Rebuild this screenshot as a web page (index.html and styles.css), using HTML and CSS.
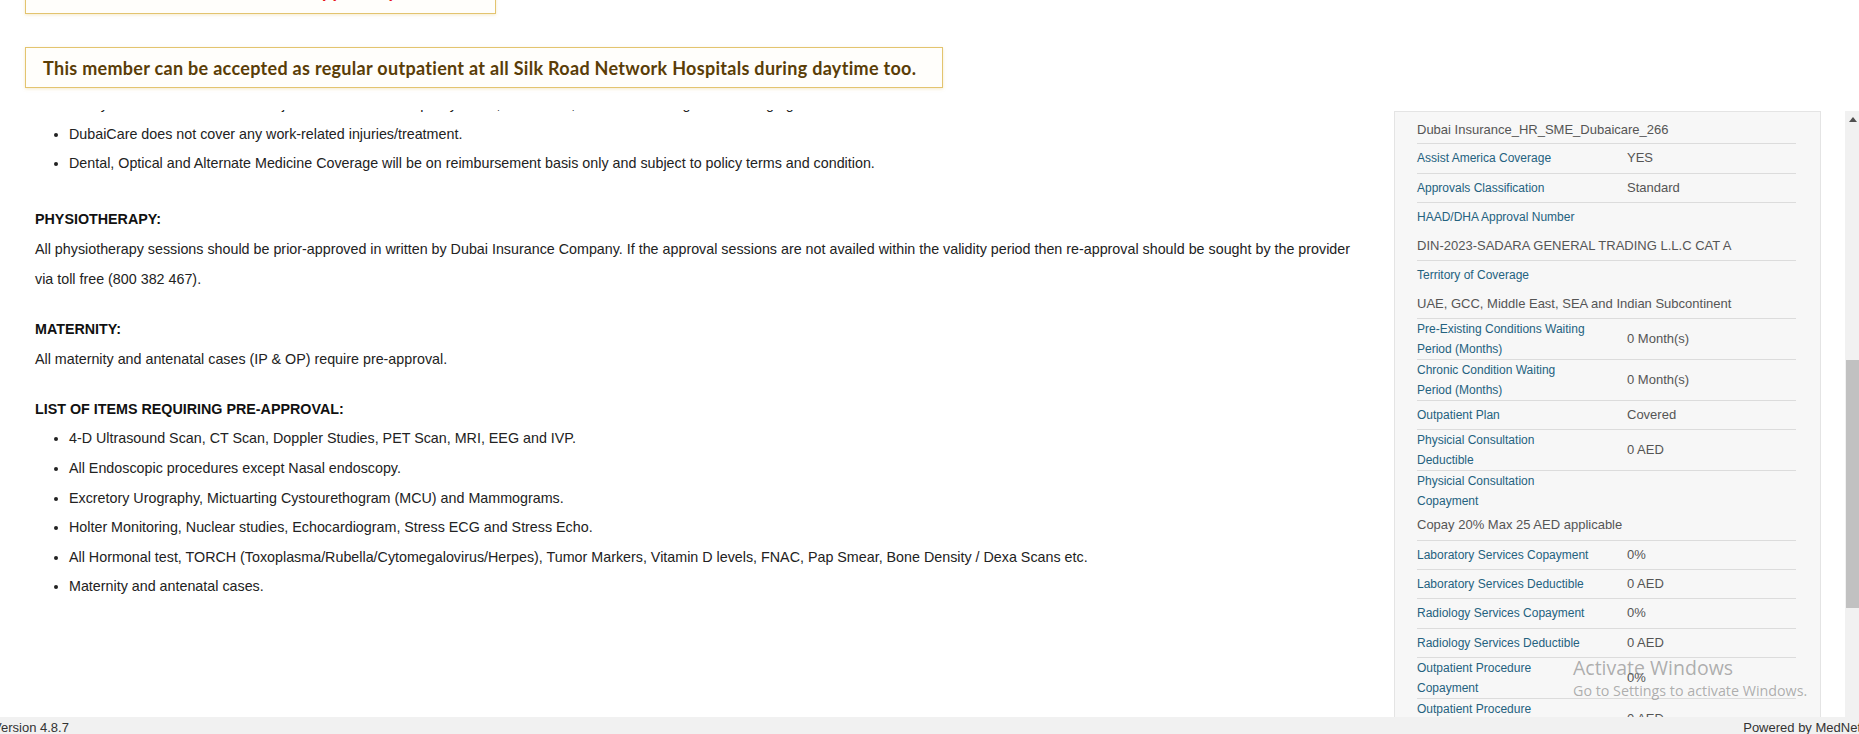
FILE: index.html
```html
<!DOCTYPE html>
<html lang="en">
<head>
<meta charset="utf-8">
<title>Member Benefits</title>
<link rel="stylesheet" href="styles.css">
</head>
<body>
<div class="page">
  <header class="alerts">
    <div class="alert alert-red">In-Patient Admissions Need Pre-Approval process</div>
    <div class="alert alert-brown">This member can be accepted as regular outpatient at all Silk Road Network Hospitals during daytime too.</div>
  </header>

  <main class="main">
    <section class="notes">
      <div class="notes-inner">
        <ul class="list">
          <li>Kindly note that all claims are subject to the DubaiCare policy terms, exclusions, limitations and agreed coverage guidelines.</li>
          <li>DubaiCare does not cover any work-related injuries/treatment.</li>
          <li>Dental, Optical and Alternate Medicine Coverage will be on reimbursement basis only and subject to policy terms and condition.</li>
        </ul>

        <h4 class="heading">PHYSIOTHERAPY:</h4>
        <p class="text">All physiotherapy sessions should be prior-approved in written by Dubai Insurance Company. If the approval sessions are not availed within the validity period then re-approval should be sought by the provider via toll free (800 382 467).</p>

        <h4 class="heading">MATERNITY:</h4>
        <p class="text">All maternity and antenatal cases (IP &amp; OP) require pre-approval.</p>

        <h4 class="heading">LIST OF ITEMS REQUIRING PRE-APPROVAL:</h4>
        <ul class="list">
          <li>4-D Ultrasound Scan, CT Scan, Doppler Studies, PET Scan, MRI, EEG and IVP.</li>
          <li>All Endoscopic procedures except Nasal endoscopy.</li>
          <li>Excretory Urography, Mictuarting Cystourethogram (MCU) and Mammograms.</li>
          <li>Holter Monitoring, Nuclear studies, Echocardiogram, Stress ECG and Stress Echo.</li>
          <li>All Hormonal test, TORCH (Toxoplasma/Rubella/Cytomegalovirus/Herpes), Tumor Markers, Vitamin D levels, FNAC, Pap Smear, Bone Density / Dexa Scans etc.</li>
          <li>Maternity and antenatal cases.</li>
        </ul>
      </div>
    </section>

    <aside class="side">
      <div class="panel">
        <div class="row row-plain">Dubai Insurance_HR_SME_Dubaicare_266</div>
        <div class="row"><span class="label">Assist America Coverage</span><span class="value">YES</span></div>
        <div class="row"><span class="label">Approvals Classification</span><span class="value">Standard</span></div>
        <div class="row row-stack"><span class="label">HAAD/DHA Approval Number</span><span class="value">DIN-2023-SADARA GENERAL TRADING L.L.C CAT A</span></div>
        <div class="row row-stack"><span class="label">Territory of Coverage</span><span class="value">UAE, GCC, Middle East, SEA and Indian Subcontinent</span></div>
        <div class="row"><span class="label">Pre-Existing Conditions Waiting Period (Months)</span><span class="value">0 Month(s)</span></div>
        <div class="row"><span class="label">Chronic Condition Waiting Period (Months)</span><span class="value">0 Month(s)</span></div>
        <div class="row"><span class="label">Outpatient Plan</span><span class="value">Covered</span></div>
        <div class="row"><span class="label">Physicial Consultation Deductible</span><span class="value">0 AED</span></div>
        <div class="row row-stack"><span class="label">Physicial Consultation Copayment</span><span class="value">Copay 20% Max 25 AED applicable</span></div>
        <div class="row"><span class="label">Laboratory Services Copayment</span><span class="value">0%</span></div>
        <div class="row"><span class="label">Laboratory Services Deductible</span><span class="value">0 AED</span></div>
        <div class="row"><span class="label">Radiology Services Copayment</span><span class="value">0%</span></div>
        <div class="row"><span class="label">Radiology Services Deductible</span><span class="value">0 AED</span></div>
        <div class="row"><span class="label">Outpatient Procedure Copayment</span><span class="value">0%</span></div>
        <div class="row"><span class="label">Outpatient Procedure Deductible</span><span class="value">0 AED</span></div>
      </div>
      <div class="scrollbar">
        <div class="sb-up"><svg width="8" height="5" viewBox="0 0 8 5"><path d="M0 5 L4 0 L8 5 Z" fill="#505050"/></svg></div>
        <div class="sb-thumb"></div>
      </div>
    </aside>
  </main>

  <footer class="footer">
    <span>Version 4.8.7</span>
    <span>Powered by MedNet</span>
  </footer>

  <div class="watermark">
    <div class="wm-title">Activate Windows</div>
    <div class="wm-sub">Go to Settings to activate Windows.</div>
  </div>
</div>
</body>
</html>
```

FILE: styles.css
```css
* { box-sizing: border-box; }

html, body {
  margin: 0;
  padding: 0;
}

body {
  font-family: "Liberation Sans", Arial, sans-serif;
  color: #222;
  background: #fff;
  overflow: hidden;
}

.page {
  position: relative;
  width: 1859px;
  height: 734px;
  display: flex;
  flex-direction: column;
  overflow: hidden;
}

/* ---------- alert banners ---------- */
.alerts {
  flex: none;
  height: 110px;
  display: flex;
  flex-direction: column;
  align-items: flex-start;
  gap: 33px;
  padding-left: 25px;
  background: #fff;
}

.alert {
  height: 41px;
  display: flex;
  align-items: center;
  padding: 0 17px;
  border: 1px solid #e3c46f;
  background: #fffefb;
  box-shadow: 0 1px 3px rgba(226, 196, 111, 0.35);
  font-family: Lato, "Open Sans", sans-serif;
  font-weight: 700;
  font-size: 18px;
  letter-spacing: 0.3px;
  white-space: nowrap;
  overflow: hidden;
}

.alert-red {
  width: 471px;
  margin-top: -27px;
  color: #e8141b;
  padding-left: 14px;
  padding-bottom: 5px;
}

.alert-brown {
  width: 918px;
  color: #5a3d07;
}

/* ---------- main area ---------- */
.main {
  flex: 1;
  min-height: 0;
  display: flex;
}

.notes {
  flex: 1;
  min-width: 0;
  overflow: hidden;
  padding: 0 32px 0 35px;
  font-size: 14.3px;
  line-height: 29.6px;
}

.notes-inner {
  margin-top: -19.8px;
}

.list {
  margin: 0 0 26.5px;
  padding-left: 34px;
}

.heading {
  margin: 20.7px 0 0;
  font-size: 14.3px;
  font-weight: 700;
  color: #111;
}

.text {
  margin: 0;
}

/* ---------- side panel ---------- */
.side {
  flex: none;
  width: 465px;
  display: flex;
  gap: 24px;
  padding-top: 1px;
}

.panel {
  flex: none;
  width: 427px;
  background: #f7f7f7;
  border: 1px solid #e4e4e4;
  border-bottom: none;
  padding: 3px 24px 0 22px;
  overflow: hidden;
}

.row {
  display: flex;
  align-items: center;
  min-height: 29.3px;
  border-bottom: 1px solid #dcdcdc;
}

.row-plain {
  font-size: 13px;
  color: #555;
}

.label {
  flex: none;
  width: 210px;
  padding-right: 37px;
  font-size: 12px;
  line-height: 20px;
  color: #24627f;
}

.value {
  font-size: 13px;
  line-height: 20px;
  color: #555;
}

.row-stack {
  flex-direction: column;
  align-items: stretch;
}

.row-stack .label,
.row-stack .value {
  display: flex;
  align-items: center;
  min-height: 28.5px;
}

/* fake scrollbar */
.scrollbar {
  flex: none;
  width: 14px;
  background: #f1f1f1;
  display: flex;
  flex-direction: column;
}

.sb-up {
  height: 17px;
  display: flex;
  align-items: center;
  justify-content: center;
  padding-left: 1px;
}

.sb-thumb {
  margin-top: 232px;
  margin-left: 1px;
  height: 248px;
  background: #c1c1c1;
}

/* ---------- footer ---------- */
.footer {
  flex: none;
  height: 17px;
  width: 1880px;
  margin-left: -7px;
  padding: 3px 12px 0 0;
  display: flex;
  justify-content: space-between;
  background: #f1f1f1;
  font-size: 13px;
  line-height: 16px;
  color: #333;
  white-space: nowrap;
}

/* ---------- OS watermark overlay ---------- */
.watermark {
  position: absolute;
  left: 1573px;
  top: 655px;
  pointer-events: none;
  font-family: "Open Sans", "Noto Sans", sans-serif;
  color: rgba(110, 110, 110, 0.55);
}

.wm-title {
  font-size: 19.5px;
  line-height: 26px;
}

.wm-sub {
  font-size: 14.3px;
  line-height: 20px;
}
```
